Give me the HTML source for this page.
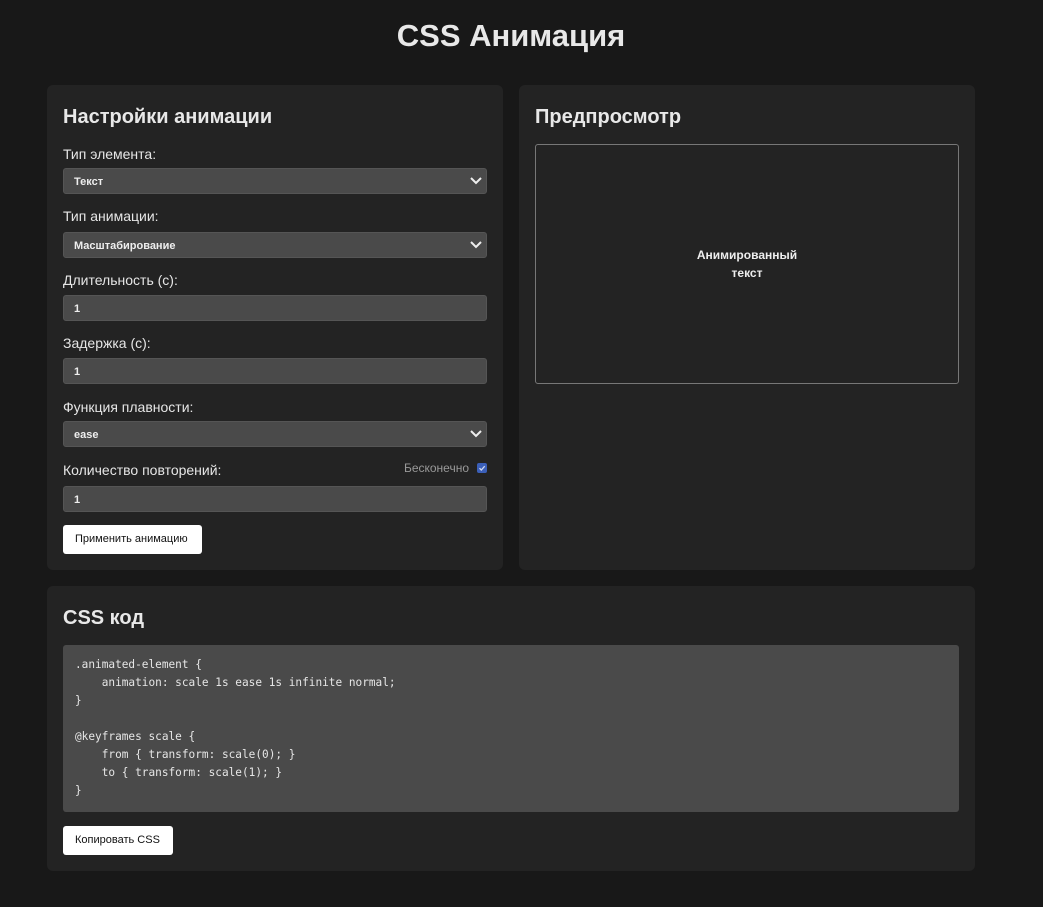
<!DOCTYPE html>
<html><head><meta charset="utf-8"><style>
*{box-sizing:border-box;margin:0;padding:0}
body{width:1043px;height:907px;background:#181818;font-family:"Liberation Sans",Arial,sans-serif;color:#e6e6e6;position:relative;overflow:hidden}
h1{position:absolute;top:18px;left:0;width:1022px;text-align:center;font-size:31px;font-weight:bold;color:#e8e8e8}
.panel{position:absolute;background:#232323;border-radius:6px}
h2{position:absolute;left:16px;font-size:20px;font-weight:bold;color:#e8e8e8}
.lbl{position:absolute;left:16px;font-size:14px;color:#e6e6e6}
.fld{position:absolute;left:16px;width:424px;height:26px;background:#4a4a4a;border:1px solid #555;border-radius:3px;font-size:11px;font-weight:bold;color:#eee;padding:7px 10px}
.fld svg{position:absolute;right:4px;top:8px}
.btn{position:absolute;left:16px;background:#fff;color:#111;border-radius:3px;font-size:11px;height:29px;line-height:29px;padding:0 13px 0 12px;white-space:nowrap}
pre{position:absolute;left:16px;top:59px;width:896px;height:167px;background:#4a4a4a;border-radius:3px;font-family:"DejaVu Sans Mono","Liberation Mono",monospace;font-size:11.1px;line-height:18px;color:#e6e6e6;padding:11px 12px}
</style></head><body>
<h1>CSS Анимация</h1>
<div class="panel" style="left:47px;top:85px;width:456px;height:485px">
<h2 style="top:21px">Настройки анимации</h2>
<div class="lbl" style="top:61px">Тип элемента:</div>
<div class="fld" style="top:83px">Текст<svg width="12" height="8"><path d="M1 1l5 5 5-5" stroke="#eee" stroke-width="2" fill="none"/></svg></div>
<div class="lbl" style="top:123px">Тип анимации:</div>
<div class="fld" style="top:147px">Масштабирование<svg width="12" height="8"><path d="M1 1l5 5 5-5" stroke="#eee" stroke-width="2" fill="none"/></svg></div>
<div class="lbl" style="top:187px">Длительность (с):</div>
<div class="fld" style="top:210px">1</div>
<div class="lbl" style="top:250px">Задержка (с):</div>
<div class="fld" style="top:273px">1</div>
<div class="lbl" style="top:314px">Функция плавности:</div>
<div class="fld" style="top:336px">ease<svg width="12" height="8"><path d="M1 1l5 5 5-5" stroke="#eee" stroke-width="2" fill="none"/></svg></div>
<div class="lbl" style="top:377px">Количество повторений:</div>
<div style="position:absolute;right:34px;top:376px;font-size:12px;color:#999">Бесконечно</div>
<svg style="position:absolute;left:430px;top:378px" width="10" height="10"><rect width="10" height="10" rx="2" fill="#3b5fb8"/><path d="M2.5 5.2l1.8 1.8 3.4-3.8" stroke="#cfd9f2" stroke-width="1.3" fill="none"/></svg>
<div class="fld" style="top:401px">1</div>
<div class="btn" style="top:440px;padding:0 14px 0 12px">Применить анимацию</div>
</div>
<div class="panel" style="left:519px;top:85px;width:456px;height:485px">
<h2 style="top:21px">Предпросмотр</h2>
<div style="position:absolute;left:16px;top:59px;width:424px;height:240px;border:1px solid #777;border-radius:3px">
<div style="position:absolute;left:0;width:100%;top:101px;text-align:center;font-size:12px;font-weight:bold;line-height:18px;color:#eee">Анимированный<br>текст</div>
</div>
</div>
<div class="panel" style="left:47px;top:586px;width:928px;height:285px">
<h2 style="top:21px">CSS код</h2>
<pre>.animated-element {
    animation: scale 1s ease 1s infinite normal;
}

@keyframes scale {
    from { transform: scale(0); }
    to { transform: scale(1); }
}</pre>
<div class="btn" style="top:240px">Копировать CSS</div>
</div>
</body></html>
